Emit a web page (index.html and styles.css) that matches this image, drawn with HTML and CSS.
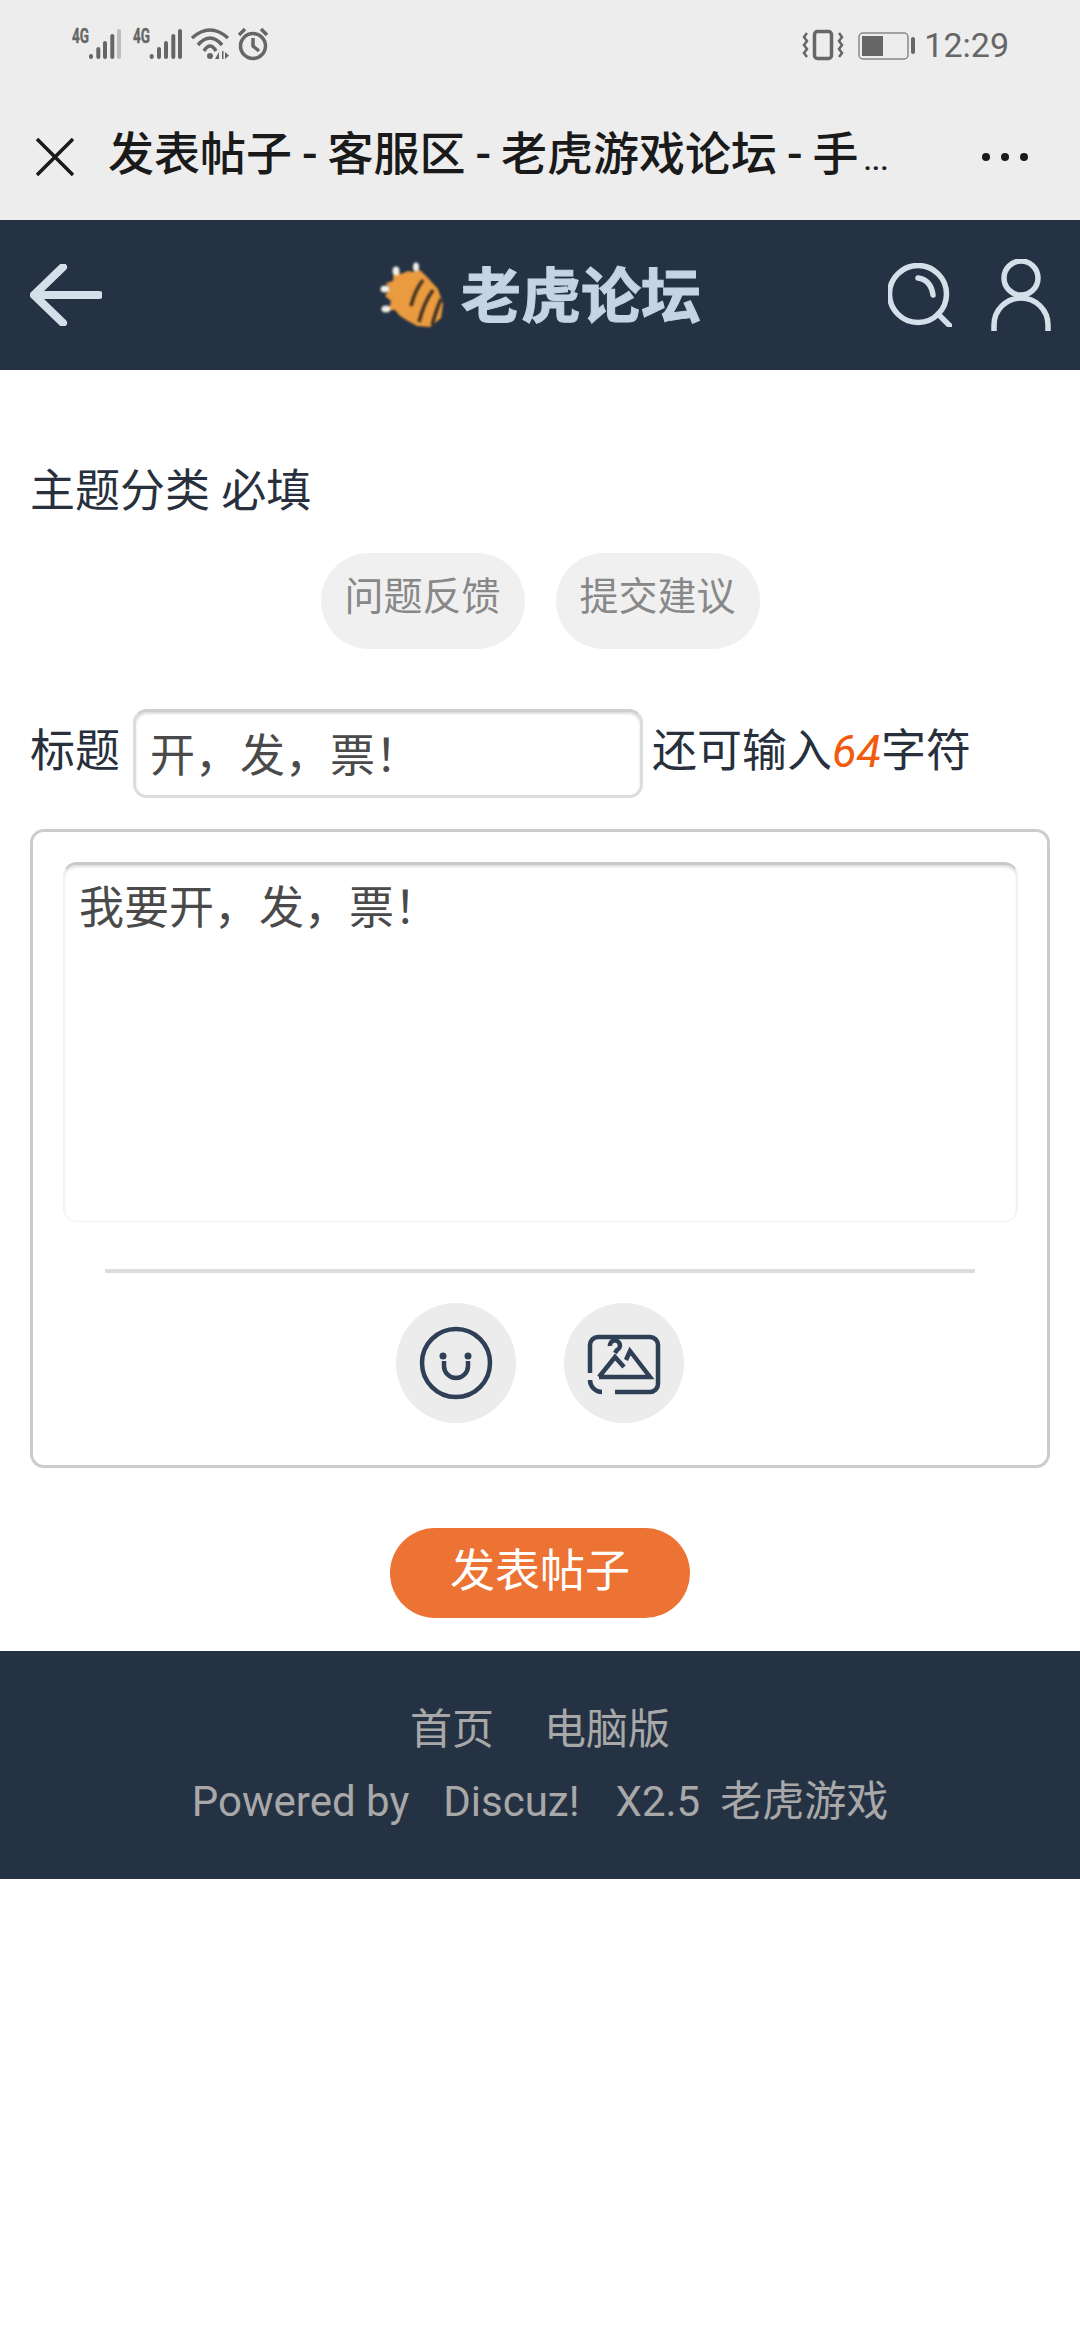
FILE: index.html
```html
<!DOCTYPE html>
<html lang="zh-CN">

<head>
    <meta charset="UTF-8">
    <meta name="viewport" content="width=device-width, initial-scale=1.0">
    <title>发表帖子</title>
    <link rel="stylesheet" href="styles.css">
</head>

<body>
    <!-- phone status bar -->
    <div class="statusbar">
        <svg class="st-left" width="200" height="40" viewBox="0 0 200 40">
            <text class="net" x="2" y="18" textLength="17" lengthAdjust="spacingAndGlyphs">4G</text>
            <rect x="19" y="29" width="4" height="5" rx="2" />
            <rect x="26.3" y="22" width="4" height="12" rx="2" />
            <rect x="33" y="16" width="4" height="18" rx="2" />
            <rect x="40.3" y="9" width="4" height="25" rx="2" />
            <rect class="dim" x="47" y="4" width="4" height="30" rx="2" />
            <text class="net" x="63" y="18" textLength="17" lengthAdjust="spacingAndGlyphs">4G</text>
            <rect x="79.7" y="29" width="4" height="5" rx="2" />
            <rect x="87" y="22" width="4" height="12" rx="2" />
            <rect x="94" y="16" width="4" height="18" rx="2" />
            <rect x="101.3" y="9" width="4" height="25" rx="2" />
            <rect x="108" y="4" width="4" height="30" rx="2" />
            <g class="line">
                <path d="M122 13Q140 -3 158 13" />
                <path d="M128 20Q140 6 152 20" />
                <path d="M134 26Q140 16 146 26" />
            </g>
            <circle cx="140" cy="31" r="3" />
            <path d="M149 27v7h-4z" />
            <path d="M152 26h1.5v8h-1.5zM155 27l4 3.500-4 3.500z" />
            <g class="line">
                <circle cx="183" cy="21" r="12.500" />
                <path d="M169 10L175 4M197 10L191 4M183 13v8l6 5" />
            </g>
        </svg>
        <svg class="st-right" width="120" height="38" viewBox="0 0 120 38">
            <rect class="line" x="15.500" y="5.500" width="17" height="27" rx="3" />
            <path class="thin" d="M8 7L5 11L8 15L5 19L8 23L5 27L8 31M40 7L43 11L40 15L43 19L40 23L43 27L40 31" />
            <rect class="bat" x="60" y="7" width="49" height="26" rx="4" />
            <rect x="63" y="10" width="21" height="20" />
            <rect x="112" y="11" width="4" height="17" rx="2" />
        </svg>
        <span class="time">12:29</span>
    </div>

    <div class="toolbar">
        <svg class="close" width="38" height="38" viewBox="0 0 38 38">
            <path d="M1 1L37 37M37 1L1 37" />
        </svg>
        <div class="pagetitle">发表帖子 - 客服区 - 老虎游戏论坛 - 手<span class="more">...</span></div>
        <div class="dots"><i></i><i></i><i></i></div>
    </div>

    <div class="header">
        <svg class="back" width="72" height="62" viewBox="0 0 72 62">
            <path d="M33 3L4 31L33 59M4 31H69" />
        </svg>
        <svg class="tiger" width="70" height="72" viewBox="8 7 70 72">
            <path class="fur" d="M24 18L31 22L38 19L43 20L50 18L58 26L68 37L73 52L71 66L60 75L47 74L38 69L30 64L25 58L19 58L21 49L15 44L20 37L16 31L23 29z" />
            <path class="stripe" d="M53 28Q45 38 41 54M63 38Q54 50 49 70M71 47Q67 56 62 73" />
            <ellipse class="claw" cx="26" cy="19" rx="3.500" ry="4.500" />
            <ellipse class="claw" cx="46" cy="15" rx="3" ry="4.500" />
            <ellipse class="claw" cx="15" cy="37" rx="4.500" ry="3.500" />
            <ellipse class="claw" cx="16" cy="57" rx="4.500" ry="3.500" />
        </svg>
        <div class="logotext">老虎论坛</div>
        <svg class="search" width="64" height="64" viewBox="0 0 64 64">
            <circle cx="30" cy="31" r="28.500" />
            <path d="M50 51L62 63" />
            <path d="M30 15Q43 17 45 32" />
        </svg>
        <svg class="user" width="60" height="72" viewBox="0 0 60 72">
            <circle cx="30" cy="19" r="17" />
            <path d="M3 72V66A27 27 0 0 1 57 66V72" />
        </svg>
    </div>

    <div class="main">
        <div class="typelabel">主题分类 必填</div>
        <div class="chips">
            <a class="chip">问题反馈</a>
            <a class="chip">提交建议</a>
        </div>

        <div class="titlerow">
            <span class="lab">标题</span>
            <input class="titleinput" type="text" value="开，发，票！">
            <span class="lab">还可输入<em class="count">64</em>字符</span>
        </div>

        <div class="card">
            <textarea class="msg">我要开，发，票！</textarea>
            <div class="rule"></div>
            <div class="tools">
                <div class="tool">
                    <svg width="120" height="120" viewBox="0 0 120 120">
                        <circle cx="60" cy="60" r="34" />
                        <path d="M48 58v5a12 12 0 0 0 24 0v-5" />
                        <circle class="eye" cx="47" cy="53" r="3.500" />
                        <circle class="eye" cx="72" cy="53" r="3.500" />
                    </svg>
                </div>
                <div class="tool">
                    <svg width="120" height="120" viewBox="0 0 120 120">
                        <path d="M26 70V42A8 8 0 0 1 34 34H86A8 8 0 0 1 94 42V81A8 8 0 0 1 86 89H51" />
                        <path d="M26 77A12 12 0 0 0 38 89" />
                        <path d="M35 74L51 54L60 64M62 57L66 48L86 74H35" />
                        <path d="M46 43A5 5 0 1 1 53 47L51 50" />
                    </svg>
                </div>
            </div>
        </div>

        <div class="submitwrap">
            <a class="submit">发表帖子</a>
        </div>
    </div>

    <div class="footer">
        <div class="fline">
            <a>首页</a>
            <a class="sp1">电脑版</a>
        </div>
        <div class="fline">
            <span>Powered by</span>
            <span class="sp2">Discuz!</span>
            <span class="sp4">X2.5</span>
            <span class="sp3">老虎游戏</span>
        </div>
    </div>
</body>

</html>
```

FILE: styles.css
```css
* {
    box-sizing: border-box;
}

body {
    margin: 0;
    background: #fff;
    color: #27303c;
    font-family: Roboto, "Noto Sans CJK SC", sans-serif;
    font-size: 45px;
}

/* status bar */
.statusbar {
    display: flex;
    align-items: center;
    height: 90px;
    padding: 0 71px 0 70px;
    background: #ededed;
    color: #666;
}

.statusbar svg {
    fill: #666;
}

.st-right {
    margin-left: auto;
}

.statusbar .dim {
    fill: #bdbdbd;
}

.net {
    font-family: Roboto, sans-serif;
    font-size: 20px;
    font-weight: 700;
    stroke: #666;
    stroke-width: 0.4;
}

.statusbar .line {
    fill: none;
    stroke: #666;
    stroke-width: 3.5;
}

.statusbar .thin {
    fill: none;
    stroke: #666;
    stroke-width: 2.5;
}

.statusbar .bat {
    fill: none;
    stroke: #888;
    stroke-width: 1.5;
}

.time {
    margin-left: 5px;
    font-size: 34px;
    line-height: 40px;
}

/* toolbar */
.toolbar {
    display: flex;
    align-items: center;
    height: 130px;
    padding: 4px 52px 0 36px;
    background: #ededed;
    color: #1a1a1a;
}

.close {
    flex: none;
    fill: none;
    stroke: #1a1a1a;
    stroke-width: 3.500;
}

.pagetitle {
    margin-left: 34px;
    font-size: 46px;
    font-weight: 500;
    line-height: 60px;
    white-space: nowrap;
    word-spacing: -1.500px;
}

.more {
    margin-left: 5px;
    font-size: 30px;
}

.dots {
    display: flex;
    gap: 11px;
    margin-left: auto;
}

.dots i {
    width: 8px;
    height: 8px;
    border-radius: 50%;
    background: #1a1a1a;
}

/* header */
.header {
    display: flex;
    align-items: center;
    height: 150px;
    padding: 0 29px 0 30px;
    background: #253243;
}

.header svg {
    flex: none;
    fill: none;
}

.back {
    stroke: #d5dfea;
    stroke-width: 8;
    stroke-linecap: round;
    stroke-linejoin: round;
}

.tiger {
    margin-left: 276px;
    filter: blur(0.9px);
}

.tiger .fur {
    fill: #ea9a3f;
}

.tiger .stripe {
    fill: none;
    stroke: #3d3020;
    stroke-width: 3.500;
}

.tiger .claw {
    fill: #f2eee6;
}

.logotext {
    margin: 5px 0 0 13px;
    color: #c5d3e2;
    font-size: 60px;
    font-weight: 700;
    line-height: 70px;
    -webkit-text-stroke: 1px #c5d3e2;
    filter: blur(0.7px);
}

.search {
    margin-left: auto;
    stroke: #d5dfea;
    stroke-width: 5.500;
    stroke-linecap: round;
}

.user {
    margin-left: 39px;
    stroke: #d5dfea;
    stroke-width: 5.500;
}

/* form */
.main {
    padding: 92px 30px 0;
}

.typelabel {
    line-height: 60px;
}

.chips {
    display: flex;
    justify-content: center;
    gap: 31px;
    margin-top: 31px;
}

.chip {
    width: 204px;
    height: 96px;
    padding-bottom: 8px;
    border-radius: 48px;
    background: #f0f0f0;
    color: #888;
    font-size: 39px;
    line-height: 88px;
    text-align: center;
}

.titlerow {
    display: flex;
    align-items: center;
    margin-top: 60px;
}

.lab {
    padding-bottom: 4px;
    line-height: 60px;
    white-space: nowrap;
}

.count {
    color: #f25a0c;
    font-style: italic;
}

.titleinput {
    width: 510px;
    height: 89px;
    margin: 0 9px 0 13px;
    padding: 0 0 3px 14px;
    border: 3px solid #dcdcda;
    border-top-color: #cfcfcd;
    border-radius: 14px;
    box-shadow: inset 0 2px 2px #ddd;
    outline: none;
    background: #fff;
    color: #4a4a4a;
    font: inherit;
}

.card {
    margin-top: 31px;
    padding: 30px 30px 40px;
    height: 639px;
    border: 3px solid #ccc;
    border-radius: 14px;
}

.msg {
    display: block;
    width: 955px;
    height: 360px;
    padding: 14px 15px;
    border: 1px solid #f2f2f2;
    border-top: 3px solid #c8c8c8;
    border-radius: 14px;
    box-shadow: inset 0 2px 3px #ddd;
    outline: none;
    resize: none;
    color: #4a4a4a;
    font: inherit;
    line-height: 60px;
}

.rule {
    height: 4px;
    margin: 47px 42px 0;
    background: #ddd;
}

.tools {
    display: flex;
    justify-content: center;
    gap: 48px;
    margin-top: 30px;
}

.tool {
    width: 120px;
    height: 120px;
    border-radius: 50%;
    background: #ececec;
}

.tool svg {
    display: block;
    fill: none;
    stroke: #2f4056;
    stroke-width: 4.500;
}

.tool .eye {
    fill: #2f4056;
    stroke: none;
}

.submitwrap {
    display: flex;
    justify-content: center;
    margin-top: 60px;
}

.submit {
    width: 300px;
    height: 90px;
    border-radius: 45px;
    background: #ec7334;
    color: #fff;
    font-size: 45px;
    line-height: 87px;
    text-align: center;
}

/* footer */
.footer {
    margin-top: 33px;
    padding: 43px 0 41px;
    background: #253243;
    color: #a8a8a8;
    font-size: 42px;
}

.fline {
    display: flex;
    justify-content: center;
    height: 72px;
    line-height: 72px;
}

.sp1 {
    margin-left: 50px;
}

.sp2 {
    margin-left: 34px;
}

.sp3 {
    margin-left: 20px;
}

.sp4 {
    margin-left: 36px;
}
```
